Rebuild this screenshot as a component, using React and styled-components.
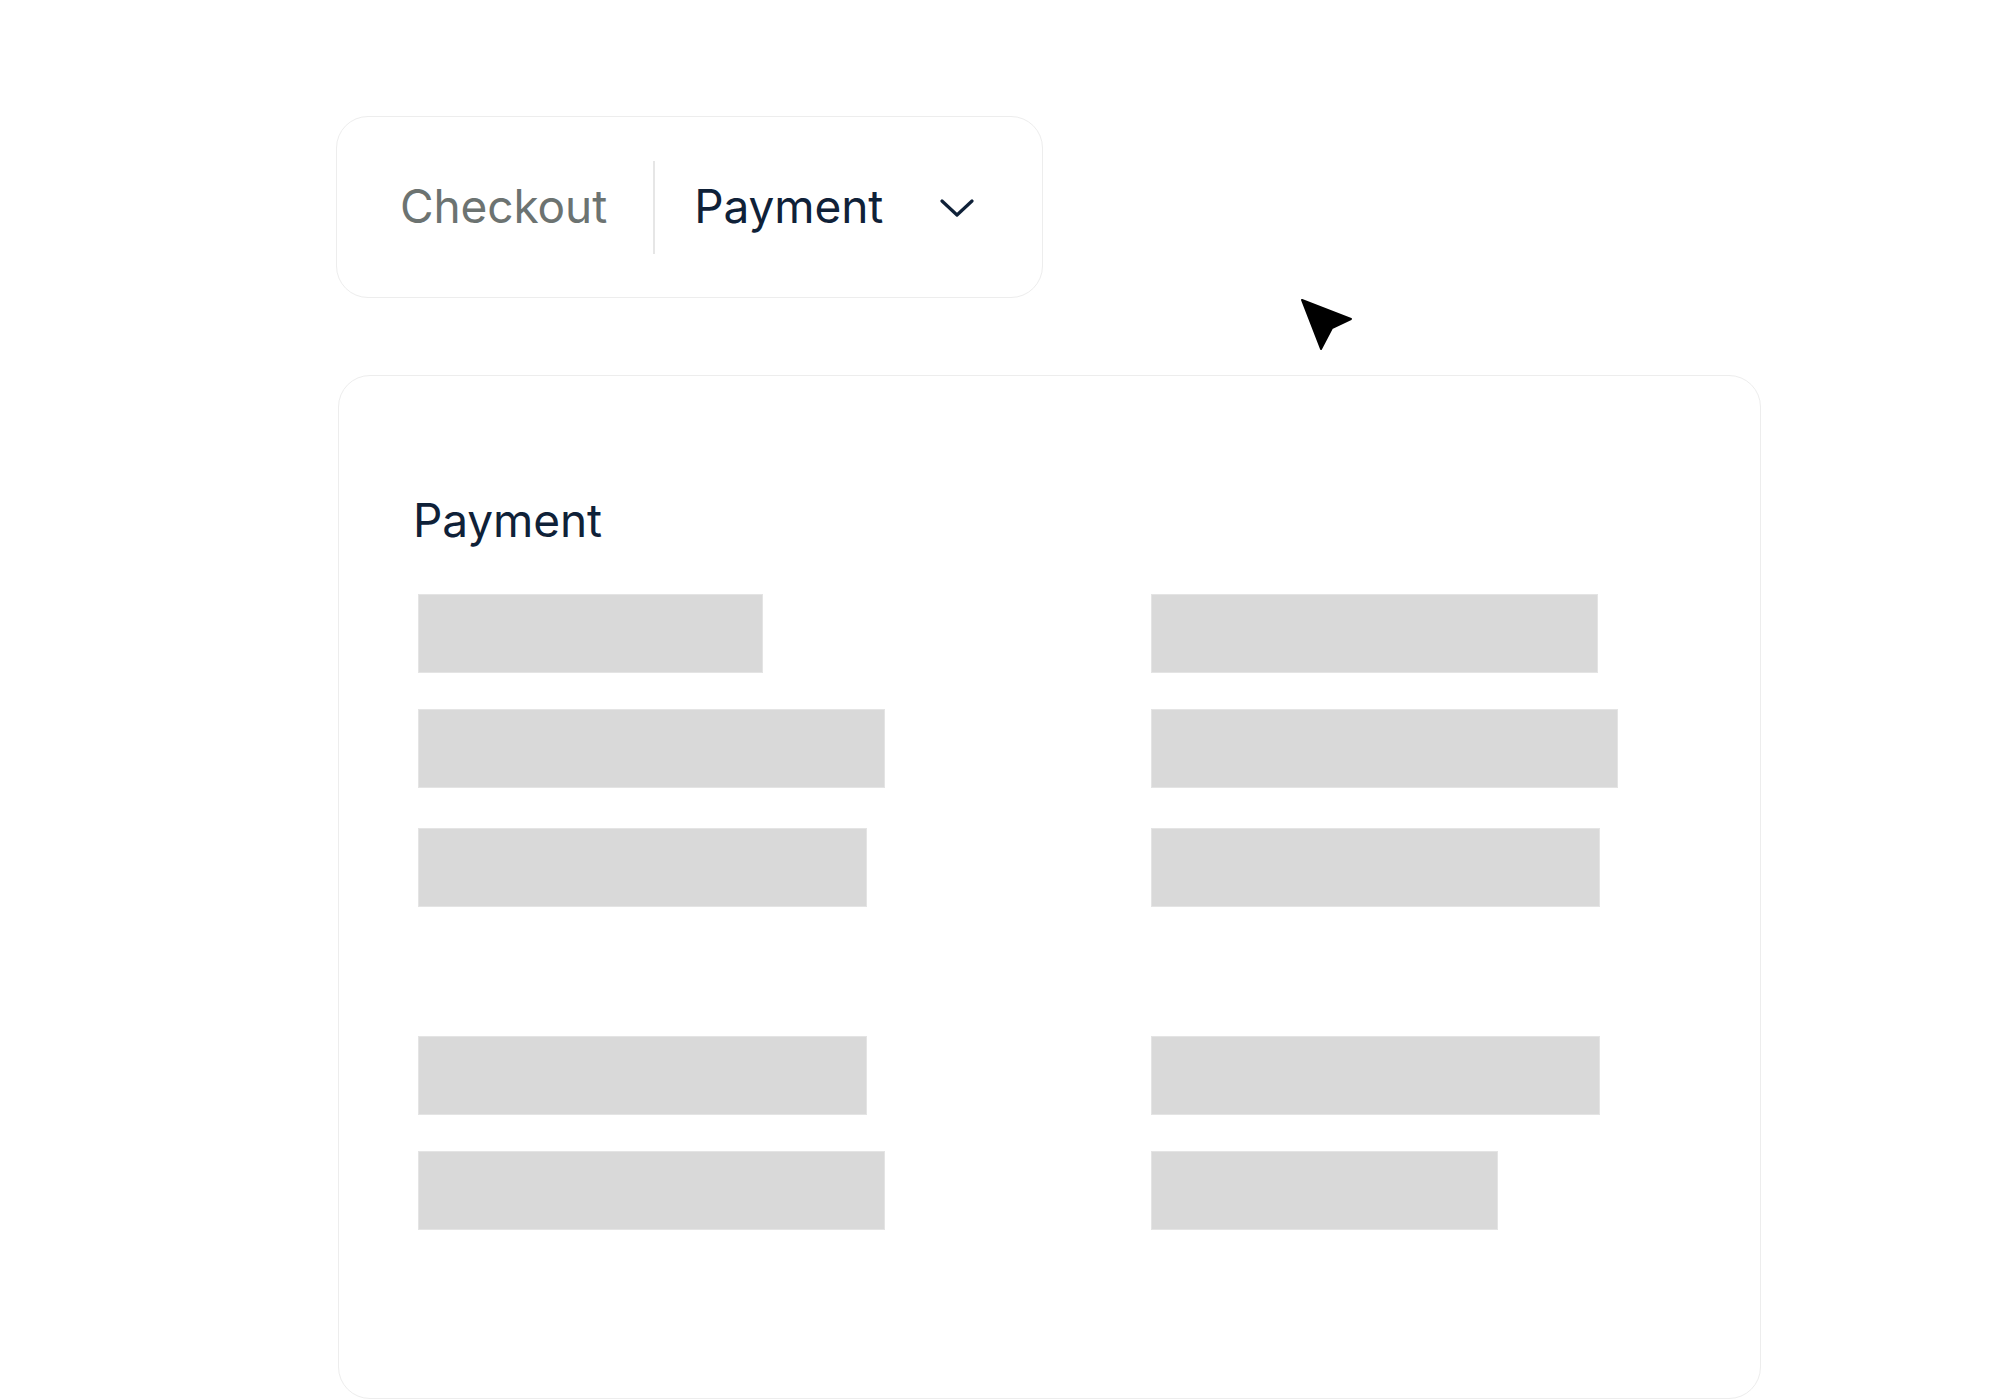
import React from 'react';
import styled, { createGlobalStyle } from 'styled-components';

const GlobalStyle = createGlobalStyle`
  html, body {
    margin: 0;
    padding: 0;
    background: #ffffff;
  }
  body {
    font-family: Inter, "Noto Sans", "Liberation Sans", sans-serif;
  }
`;

const Page = styled.div`
  position: relative;
  width: 2008px;
  height: 1400px;
  overflow: hidden;
  padding: 116px 0 0 336px;
  box-sizing: border-box;
`;

const Breadcrumb = styled.nav`
  display: flex;
  align-items: center;
  width: 707px;
  height: 182px;
  box-sizing: border-box;
  padding: 0 0 0 63px;
  border: 1px solid #ededed;
  border-radius: 32px;
  background: #fff;
`;

const Crumb = styled.span`
  font-size: 46px;
  line-height: 1.2;
  font-weight: 400;
  letter-spacing: -0.1px;
  color: ${p => (p.current ? '#0f2138' : '#6c7371')};
`;

const Divider = styled.span`
  width: 2px;
  height: 93px;
  margin: 0 39px 0 46px;
  background: #e6e6e6;
`;

const Chevron = styled.svg`
  margin-left: 57px;
  margin-top: 2px;
  flex-shrink: 0;
`;

const Pointer = styled.svg`
  position: absolute;
  left: 1298px;
  top: 296px;
`;

const Card = styled.section`
  margin: 77px 0 0 2px;
  width: 1423px;
  height: 1024px;
  box-sizing: border-box;
  border: 1px solid #ededed;
  border-radius: 32px;
  background: #fff;
  padding: 117px 0 0 79px;
`;

const Heading = styled.h2`
  margin: 0 0 46px -5px;
  font-size: 46px;
  line-height: 1.2;
  font-weight: 400;
  letter-spacing: -0.1px;
  color: #0f2138;
`;

const Fields = styled.div`
  display: grid;
  grid-template-columns: 733px 1fr;
`;

const Column = styled.div`
  display: flex;
  flex-direction: column;
`;

const Placeholder = styled.div`
  width: ${p => p.w}px;
  height: 79px;
  margin-top: ${p => p.gap}px;
  box-sizing: border-box;
  background: #d9d9d9;
  border: 1px solid #e4e4e4;
`;

const leftBars = [
  { w: 345, gap: 0 },
  { w: 467, gap: 36 },
  { w: 449, gap: 40 },
  { w: 449, gap: 129 },
  { w: 467, gap: 36 },
];

const rightBars = [
  { w: 447, gap: 0 },
  { w: 467, gap: 36 },
  { w: 449, gap: 40 },
  { w: 449, gap: 129 },
  { w: 347, gap: 36 },
];

export default function App() {
  return (
    <>
      <GlobalStyle />
      <Page>
        <Breadcrumb>
          <Crumb>Checkout</Crumb>
          <Divider />
          <Crumb current>Payment</Crumb>
          <Chevron width="34" height="20" viewBox="0 0 34 20" fill="none">
            <path
              d="M2 3 L17 17 L32 3"
              stroke="#0f2138"
              strokeWidth="3.2"
              strokeLinecap="round"
              strokeLinejoin="round"
            />
          </Chevron>
        </Breadcrumb>

        <Pointer width="58" height="58" viewBox="0 0 58 58">
          <path
            d="M4 4 L53 23 L34 32 L23 53 Z"
            fill="#000"
            stroke="#000"
            strokeWidth="2"
            strokeLinejoin="round"
          />
        </Pointer>

        <Card>
          <Heading>Payment</Heading>
          <Fields>
            <Column>
              {leftBars.map((b, i) => (
                <Placeholder key={i} w={b.w} gap={b.gap} />
              ))}
            </Column>
            <Column>
              {rightBars.map((b, i) => (
                <Placeholder key={i} w={b.w} gap={b.gap} />
              ))}
            </Column>
          </Fields>
        </Card>
      </Page>
    </>
  );
}
